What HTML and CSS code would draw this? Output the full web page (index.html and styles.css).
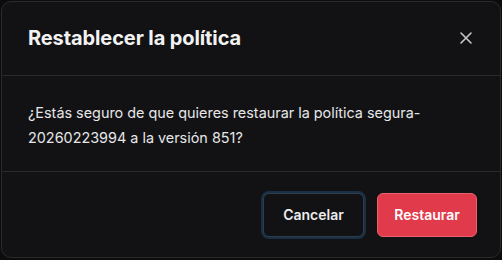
FILE: index.html
```html
<!DOCTYPE html>
<html lang="es">
<head>
    <meta charset="UTF-8">
    <meta name="viewport" content="width=device-width, initial-scale=1.0">
    <title>Restablecer la política</title>
    <link rel="stylesheet" href="styles.css">
</head>
<body>

<div class="modal">
    <div class="modal-header">
        <h2>Restablecer la política</h2>
        <button class="close-btn" aria-label="Cerrar">
            <svg width="14" height="14" viewBox="0 0 14 14" fill="none" stroke="currentColor" stroke-width="1.6" stroke-linecap="round">
                <path d="M2 2 L12 12 M12 2 L2 12"/>
            </svg>
        </button>
    </div>
    <div class="modal-body">
        <p>¿Estás seguro de que quieres restaurar la política segura-20260223994 a la versión 851?</p>
    </div>
    <div class="modal-footer">
        <button class="btn btn-cancel">Cancelar</button>
        <button class="btn btn-danger">Restaurar</button>
    </div>
</div>

</body>
</html>
```

FILE: styles.css
```css
html, body {
    margin: 0;
    padding: 0;
}
body {
    font-family: Inter, "Noto Sans", sans-serif;
    background-color: #0c0c0d;
    width: 502px;
    height: 260px;
    padding: 1px;
    box-sizing: border-box;
}
.modal {
    background-color: #121214;
    border: 1px solid #2a2a2e;
    border-radius: 10px;
    height: 257px;
    box-sizing: border-box;
    display: flex;
    flex-direction: column;
}
.modal-header {
    display: flex;
    justify-content: space-between;
    align-items: center;
    height: 73px;
    padding: 0 27px 0 26px;
    border-bottom: 1px solid #2a2a2e;
}
.modal-header h2 {
    margin: 0;
    margin-top: -2px;
    font-size: 20px;
    font-weight: 700;
    color: #f2f2f3;
    letter-spacing: -0.1px;
}
.close-btn {
    background: none;
    border: none;
    padding: 0;
    margin-top: -2px;
    color: #c8c8cc;
    display: flex;
    cursor: pointer;
}
.modal-body {
    height: 96px;
    padding: 0 26px;
    border-bottom: 1px solid #2a2a2e;
    box-sizing: border-box;
}
.modal-body p {
    margin: 0;
    padding-top: 24px;
    font-size: 14.4px;
    line-height: 25px;
    color: #e6e6e8;
}
.modal-footer {
    flex: 1;
    display: flex;
    justify-content: flex-end;
    align-items: center;
    gap: 13px;
    padding: 0 23px;
}
.btn {
    font-family: inherit;
    font-size: 14px;
    font-weight: 600;
    height: 44px;
    border-radius: 6px;
    cursor: pointer;
}
.btn-cancel {
    width: 101px;
    background-color: #121214;
    color: #ececee;
    border: 1px solid #2c3e4e;
    box-shadow: 0 0 0 2px #1b3044;
}
.btn-danger {
    width: 100px;
    background-color: #e03a4b;
    color: #fff;
    border: 1px solid #ea6170;
}
```
